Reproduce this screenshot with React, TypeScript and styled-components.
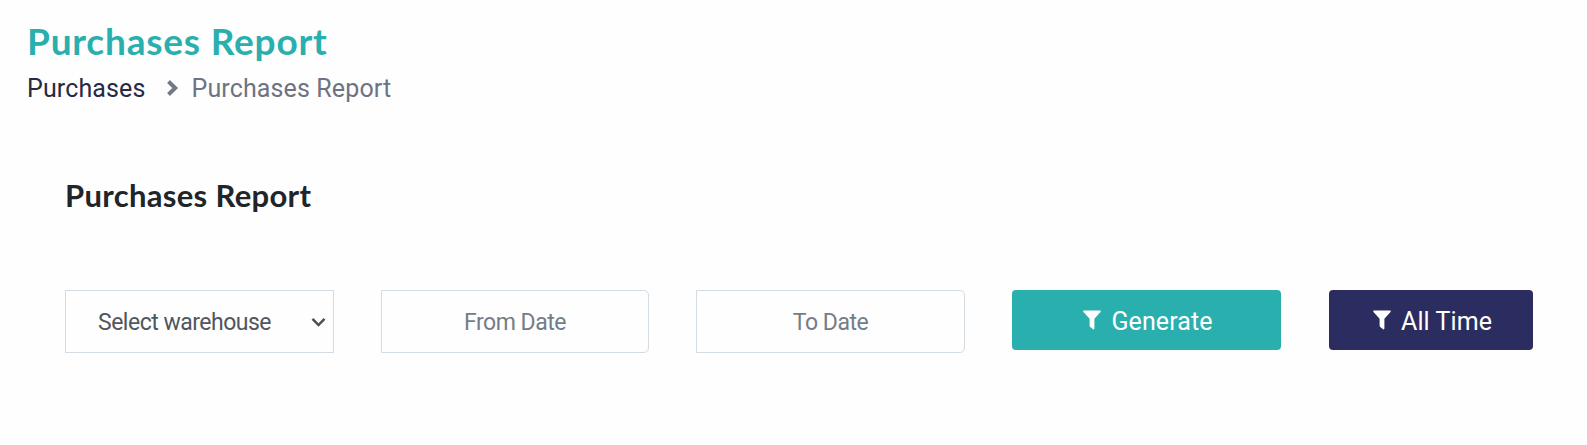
import React from "react";
import styled, { createGlobalStyle } from "styled-components";

const GlobalStyle = createGlobalStyle`
  *, *::before, *::after { box-sizing: border-box; }
  body {
    margin: 0;
    background: #fefefe;
    font-family: Roboto, "Liberation Sans", sans-serif;
    color: #212529;
  }
`;

const Page = styled.main`
  width: 1587px;
  height: 445px;
  padding: 18px 27px 0;
  overflow: hidden;
`;

const PageTitle = styled.h1`
  margin: 0;
  font: 700 37px/46px Lato, sans-serif;
  letter-spacing: 0.8px;
  color: #2aafaf;
  white-space: nowrap;
`;

const Breadcrumb = styled.nav`
  display: flex;
  align-items: center;
  height: 30px;
  margin-top: 9px;
  font-size: 25px;
  line-height: 30px;
  letter-spacing: 0.13px;
  color: #6d7383;
  white-space: nowrap;

  > a, > span { padding-top: 1px; }
`;

const Crumb = styled.a`
  color: #262a42;
`;

const Separator = styled.svg`
  width: 12px;
  height: 16px;
  margin: 0 12px 0 22px;
`;

const Card = styled.section`
  margin-top: 72px;
  padding: 0 27px 0 38px;
`;

const CardTitle = styled.h2`
  margin: 0;
  font: 700 31px/40px Lato, sans-serif;
  letter-spacing: 0.32px;
  color: #212529;
  white-space: nowrap;
`;

const Filters = styled.form`
  display: grid;
  grid-template-columns: 269px 268px 269px 269px 204px;
  column-gap: 47px;
  align-items: start;
  width: 1469px;
  margin-top: 75px;

  > :last-child { margin-left: 1px; }
`;

const Field = styled.button<{ $select?: boolean }>`
  display: flex;
  align-items: center;
  justify-content: ${(p) => (p.$select ? "space-between" : "center")};
  width: 100%;
  height: 63px;
  padding: ${(p) => (p.$select ? "3px 7px 0 32px" : "3px 0 0")};
  border: 1px solid #d3dce2;
  border-radius: ${(p) => (p.$select ? "0" : "0 5px 5px 0")};
  background: #fefefe;
  color: ${(p) => (p.$select ? "#4e5760" : "#747d86")};
  font: 400 23px/30px Roboto, sans-serif;
  letter-spacing: -0.5px;
  white-space: nowrap;
`;

const Chevron = styled.svg`
  width: 15px;
  height: 11px;
  margin-top: -2px;
`;

const Action = styled.button<{ $color: string }>`
  display: flex;
  align-items: center;
  justify-content: center;
  gap: 10px;
  width: 100%;
  height: 60px;
  padding: 3px 0 0 3px;
  border: 0;
  border-radius: 4px;
  background: ${(p) => p.$color};
  color: #fff;
  font: 400 25px/30px Roboto, sans-serif;
  letter-spacing: 0.08px;
  white-space: nowrap;
`;

const Funnel = styled.svg`
  width: 18px;
  height: 20px;
  margin-top: -3px;
`;

const FilterIcon = () => (
  <Funnel viewBox="0 0 18 20" fill="#fff" aria-hidden="true">
    <path d="M0.8 0.5H17.2Q18.2 1 17.5 2L11.4 8.8V18.6Q11.2 19.8 10.1 19.2L7.2 17Q6.6 16.4 6.6 15.5V8.8L0.5 2Q-0.2 1 0.8 0.5Z" />
  </Funnel>
);

export default function App() {
  return (
    <>
      <GlobalStyle />
      <Page>
        <PageTitle>Purchases Report</PageTitle>
        <Breadcrumb aria-label="Breadcrumb">
          <Crumb>Purchases</Crumb>
          <Separator viewBox="0 0 12 16" fill="none" aria-hidden="true">
            <path d="M1.5 1.5L8.2 8L1.5 14.5" stroke="#737a85" strokeWidth="4" />
          </Separator>
          <span>Purchases Report</span>
        </Breadcrumb>
        <Card>
          <CardTitle>Purchases Report</CardTitle>
          <Filters>
            <Field type="button" $select>
              <span>Select warehouse</span>
              <Chevron viewBox="0 0 15 11" fill="none" aria-hidden="true">
                <path d="M1.5 1.8L7.5 8L13.5 1.8" stroke="#495057" strokeWidth="2.5" />
              </Chevron>
            </Field>
            <Field type="button">From Date</Field>
            <Field type="button">To Date</Field>
            <Action type="button" $color="#2aafaf">
              <FilterIcon />
              <span>Generate</span>
            </Action>
            <Action type="button" $color="#2b2c5f">
              <FilterIcon />
              <span>All Time</span>
            </Action>
          </Filters>
        </Card>
      </Page>
    </>
  );
}
